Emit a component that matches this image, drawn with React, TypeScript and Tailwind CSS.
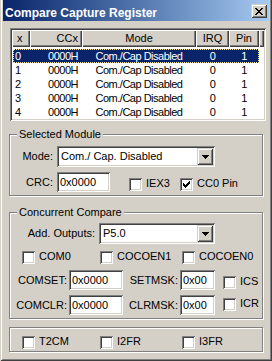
import React from 'react'

const sunken = 'shadow-[inset_1px_1px_0_#808080,inset_-1px_-1px_0_#fff,inset_2px_2px_0_#404040,inset_-2px_-2px_0_#d4d0c8]'
const raised = 'shadow-[inset_1px_1px_0_#d4d0c8,inset_-1px_-1px_0_#404040,inset_2px_2px_0_#fff,inset_-2px_-2px_0_#808080]'
const headerCell = 'h-full flex items-center shrink-0 shadow-[inset_1px_1px_0_#fff,inset_-1px_-1px_0_#404040,inset_-2px_-2px_0_#808080]'

const rows = [0, 1, 2, 3, 4].map(i => ({ x: String(i), ccx: '0000H', mode: 'Com./Cap Disabled', irq: '0', pin: '1' }))

function Check({ label, checked, className }: { label: string; checked?: boolean; className?: string }) {
  return (
    <div className={'flex items-center shrink-0 ' + (className ?? '')}>
      <span className={'w-[13px] h-[13px] bg-white flex items-center justify-center shrink-0 ' + sunken}>
        {checked && (
          <svg width="7" height="7" viewBox="0 0 7 7" shapeRendering="crispEdges">
            <path fill="#000" d="M6 0h1v1h-1zM5 1h2v1h-2zM0 2h1v1h-1zM4 2h3v1h-3zM0 3h2v1h-2zM3 3h3v1h-3zM0 4h5v1h-5zM1 5h3v1h-3zM2 6h1v1h-1z" />
          </svg>
        )}
      </span>
      <span className="ml-[4px] mb-[2px] whitespace-nowrap">{label}</span>
    </div>
  )
}

function Combo({ value, className }: { value: string; className?: string }) {
  return (
    <div className={'h-[21px] bg-white flex items-center p-[2px] shrink-0 ' + sunken + ' ' + (className ?? '')}>
      <span className="flex-1 pl-[2px] whitespace-nowrap overflow-hidden">{value}</span>
      <span className={'w-[16px] h-[17px] bg-[#d4d0c8] flex items-center justify-center shrink-0 ' + raised}>
        <svg width="7" height="4" viewBox="0 0 7 4" shapeRendering="crispEdges">
          <path fill="#000" d="M0 0h7v1h-7zM1 1h5v1h-5zM2 2h3v1h-3zM3 3h1v1h-1z" />
        </svg>
      </span>
    </div>
  )
}

function Edit({ value, className }: { value: string; className?: string }) {
  return (
    <div className={'h-[20px] bg-white flex items-center pl-[3px] shrink-0 ' + sunken + ' ' + (className ?? '')}>
      {value}
    </div>
  )
}

function Group({ label, className, children }: { label?: string; className?: string; children: React.ReactNode }) {
  return (
    <div className={'relative ml-[9px] w-[254px] shrink-0 border border-[#808080] shadow-[1px_1px_0_#fff,inset_1px_1px_0_#fff] ' + (className ?? '')}>
      {label && (
        <span className="absolute left-[7px] -top-[7px] bg-[#d4d0c8] px-[2px] leading-[13px] whitespace-nowrap">{label}</span>
      )}
      {children}
    </div>
  )
}

export default function App() {
  return (
    <div className="w-[272px] h-[361px] bg-[#d4d0c8] flex flex-col overflow-hidden text-black text-[11px] leading-none font-['Liberation_Sans',Arial,sans-serif] shadow-[inset_1px_0_0_#d4d0c8,inset_-1px_-1px_0_#404040,inset_2px_0_0_#fff,inset_-2px_-2px_0_#808080]">
      {/* title bar */}
      <div className="mx-[3px] h-[21px] shrink-0 flex items-start bg-linear-to-r from-[#0a246a] to-[#a6caf0]">
        <span className="pl-[2px] pt-[7px] text-white font-bold text-[12px] leading-[12px] whitespace-nowrap">Compare Capture Register</span>
        <span className={'ml-auto mr-[2px] mt-[4px] w-[16px] h-[14px] bg-[#d4d0c8] flex items-center justify-center ' + raised}>
          <svg width="8" height="7" viewBox="0 0 8 7" shapeRendering="crispEdges">
            <path fill="#000" d="M0 0h2v1h-2zM6 0h2v1h-2zM1 1h2v1h-2zM5 1h2v1h-2zM2 2h4v1h-4zM3 3h2v1h-2zM2 4h4v1h-4zM1 5h2v1h-2zM5 5h2v1h-2zM0 6h2v1h-2zM6 6h2v1h-2z" />
          </svg>
        </span>
      </div>

      {/* list view */}
      <div className={'mt-[7px] ml-[10px] w-[256px] h-[93px] shrink-0 bg-white p-[2px] ' + sunken}>
        <div className="flex h-[17px] bg-[#d4d0c8]">
          <div className={headerCell + ' w-[18px] pl-[5px]'}>x</div>
          <div className={headerCell + ' w-[52px] justify-end pr-[4px]'}>CCx</div>
          <div className={headerCell + ' w-[114px] justify-center'}>Mode</div>
          <div className={headerCell + ' w-[33px] justify-center'}>IRQ</div>
          <div className={headerCell + ' w-[30px] justify-center'}>Pin</div>
          <div className={headerCell + ' flex-1'}></div>
        </div>
        <div className="pt-[2px] tracking-[-0.5px]">
          {rows.map((r, i) => (
            <div
              key={r.x}
              className={
                'ml-[1px] w-[246px] h-[14px] leading-[14px] flex ' +
                (i === 0 ? 'bg-[#0a246a] text-white outline-1 outline-dotted outline-[#f5e6a0] -outline-offset-1' : '')
              }
            >
              <span className="w-[17px] pl-[2px]">{r.x}</span>
              <span className="w-[52px] text-right pr-[4px]">{r.ccx}</span>
              <span className="w-[114px] text-center whitespace-nowrap">{r.mode}</span>
              <span className="w-[33px] text-center">{r.irq}</span>
              <span className="w-[30px] text-center">{r.pin}</span>
            </div>
          ))}
        </div>
      </div>

      {/* selected module */}
      <Group label="Selected Module" className="mt-[13px] h-[62px]">
        <div className="pt-[11px]">
          <div className="flex items-center">
            <span className="w-[43px] text-right">Mode:</span>
            <Combo value="Com./ Cap. Disabled" className="ml-[4px] w-[158px]" />
          </div>
          <div className="flex items-start mt-[5px]">
            <span className="w-[43px] text-right self-center">CRC:</span>
            <Edit value="0x0000" className="ml-[4px] w-[53px]" />
            <Check label="IEX3" className="ml-[19px] mt-[6px] w-[51px]" />
            <Check label="CC0 Pin" checked className="mt-[6px]" />
          </div>
        </div>
      </Group>

      {/* concurrent compare */}
      <Group label="Concurrent Compare" className="mt-[16px] h-[107px]">
        <div className="pt-[10px]">
          <div className="flex items-center">
            <span className="w-[85px] text-right whitespace-nowrap">Add. Outputs:</span>
            <Combo value="P5.0" className="ml-[4px] w-[116px]" />
          </div>
          <div className="flex mt-[7px]">
            <Check label="COM0" className="ml-[12px] w-[78px]" />
            <Check label="COCOEN1" className="w-[82px]" />
            <Check label="COCOEN0" />
          </div>
          <div className="flex items-start mt-[6px]">
            <span className="w-[57px] text-right self-center">COMSET:</span>
            <Edit value="0x0000" className="ml-[2px] w-[54px]" />
            <span className="w-[55px] text-right self-center">SETMSK:</span>
            <Edit value="0x00" className="ml-[2px] w-[35px]" />
            <Check label="ICS" className="ml-[8px] mt-[6px]" />
          </div>
          <div className="flex items-start mt-[5px]">
            <span className="w-[57px] text-right self-center">COMCLR:</span>
            <Edit value="0x0000" className="ml-[2px] w-[54px]" />
            <span className="w-[55px] text-right self-center">CLRMSK:</span>
            <Edit value="0x00" className="ml-[2px] w-[35px]" />
            <Check label="ICR" className="ml-[8px] mt-[3px]" />
          </div>
        </div>
      </Group>

      {/* timer flags */}
      <Group className="mt-[8px] h-[25px]">
        <div className="flex pt-[8px]">
          <Check label="T2CM" className="ml-[12px] w-[78px]" />
          <Check label="I2FR" className="w-[82px]" />
          <Check label="I3FR" />
        </div>
      </Group>
    </div>
  )
}
